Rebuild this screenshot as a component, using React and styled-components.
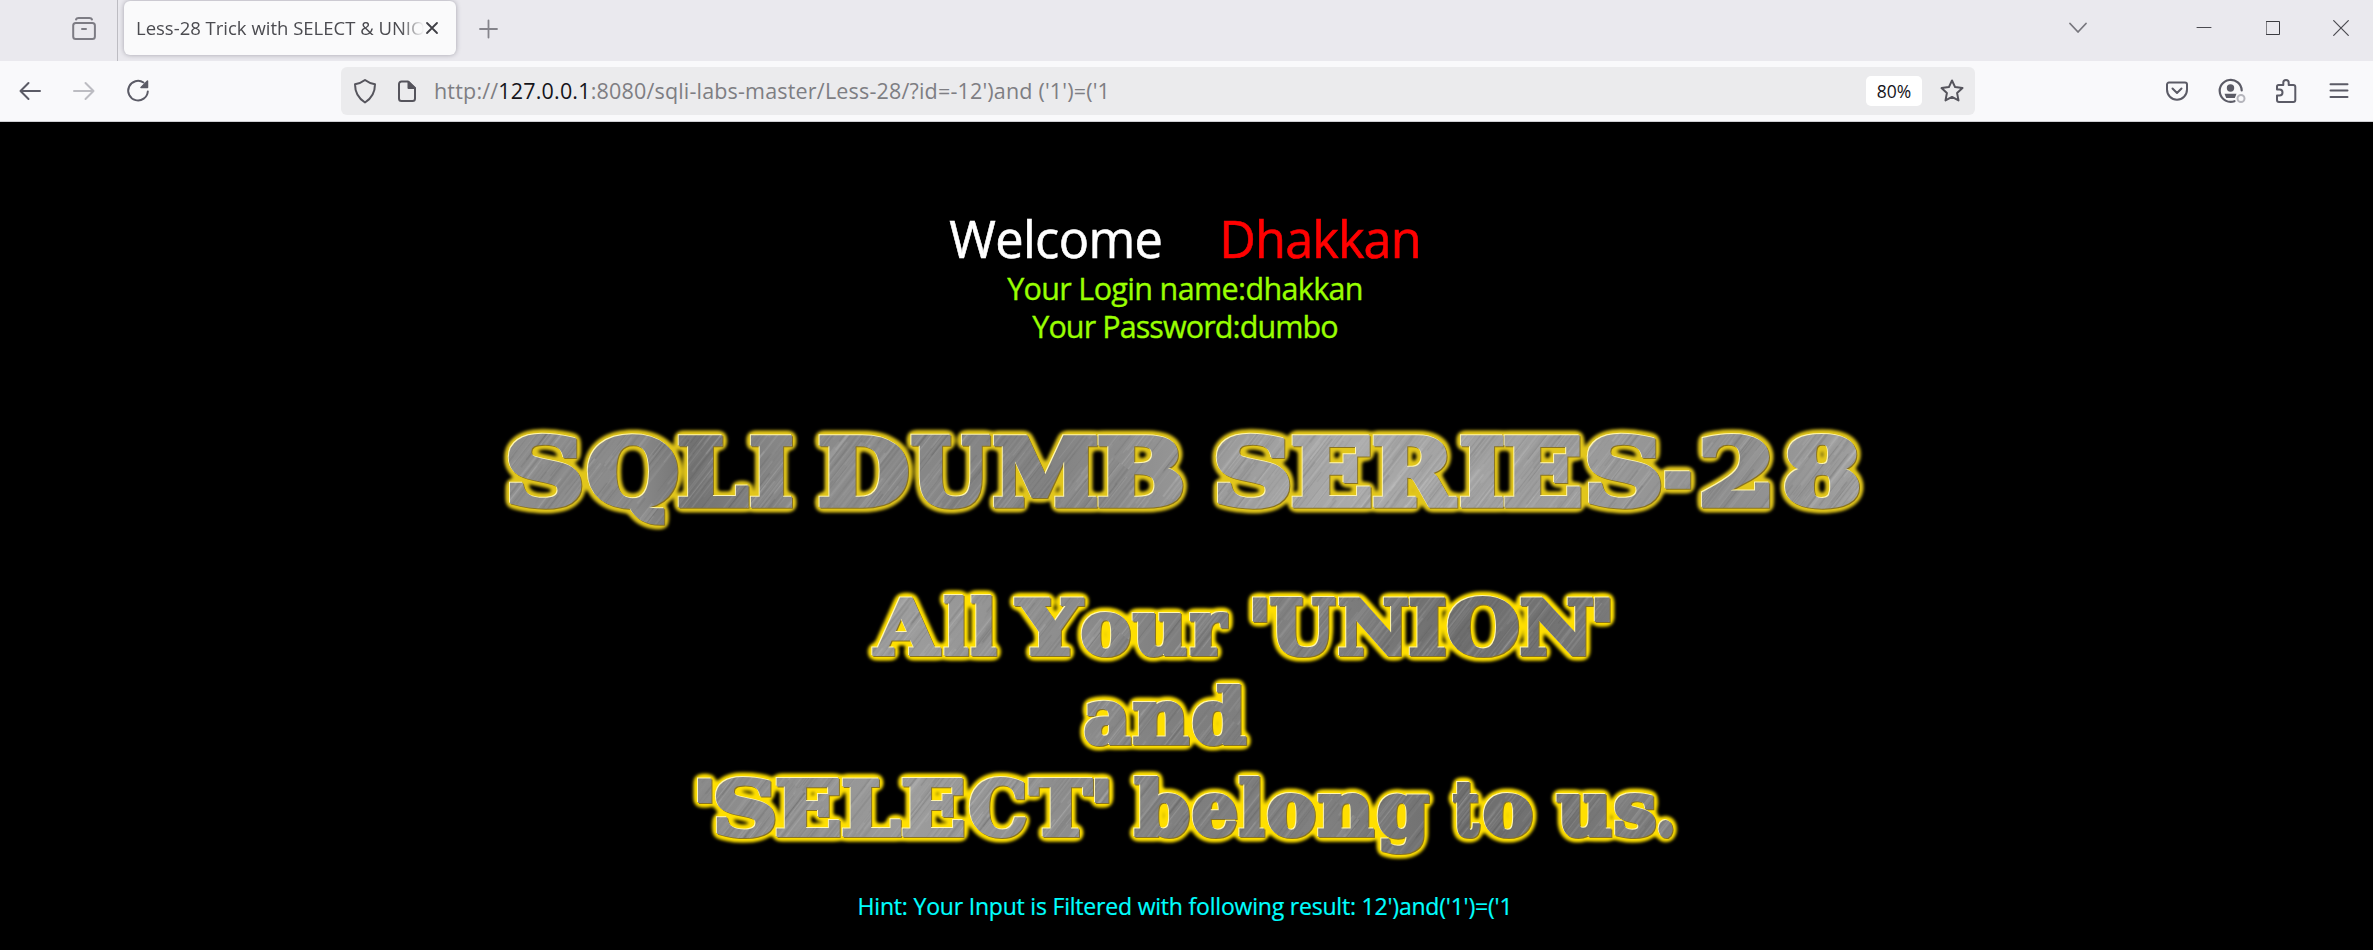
import React from 'react';
import styled, { createGlobalStyle } from 'styled-components';

const GlobalStyle = createGlobalStyle`
  html, body { margin: 0; padding: 0; background: #000; }
  * { box-sizing: border-box; }
`;

const Window = styled.div`
  width: 100%;
  height: 950px;
  display: flex;
  flex-direction: column;
  overflow: hidden;
  background: #000;
  font-family: 'Open Sans', 'Noto Sans', sans-serif;
`;

const TabStrip = styled.header`
  display: flex;
  align-items: flex-start;
  height: 61px;
  flex: none;
  background: #eae9ee;
`;

const ArchiveSlot = styled.div`
  width: 118px;
  height: 61px;
  padding: 15px 0 0 70px;
  border-right: 1px solid #bdbcc2;
`;

const Tab = styled.div`
  display: flex;
  align-items: center;
  width: 332px;
  height: 54px;
  margin: 1px 22px 0 6px;
  padding: 0 16px 0 12px;
  border-radius: 6px;
  background: #fafafb;
  box-shadow: 0 0 5px rgba(60, 58, 75, 0.4);
`;

const TabTitle = styled.div`
  flex: 1;
  overflow: hidden;
  white-space: nowrap;
  font-size: 18.5px;
  line-height: 28px;
  color: #4b4b50;
  mask-image: linear-gradient(to right, #000 265px, transparent 288px);
`;

const NewTab = styled.div`
  padding-top: 18px;
  flex: 1;
`;

const WindowControls = styled.div`
  display: flex;
  align-items: center;
  height: 56px;
`;

const ControlSlot = styled.div`
  display: flex;
  justify-content: center;
  width: ${(p) => p.$width}px;
`;

const Toolbar = styled.nav`
  display: flex;
  align-items: center;
  height: 61px;
  flex: none;
  background: #f9f9fb;
  border-bottom: 1px solid #cfcfd3;
`;

const NavButtons = styled.div`
  display: flex;
  gap: 26px;
  width: 341px;
  padding-left: 16px;
`;

const AddressBar = styled.div`
  display: flex;
  align-items: center;
  width: 1634px;
  height: 48px;
  padding: 0 9px 0 10px;
  border-radius: 6px;
  background: #ebebed;
`;

const Url = styled.div`
  flex: 1;
  margin: 0 0 0 9px;
  white-space: pre;
  font-size: 21.5px;
  line-height: 30px;
  letter-spacing: 0.18px;
  color: #7e7e83;
`;

const Host = styled.span`
  color: #15141a;
`;

const ZoomBadge = styled.div`
  width: 56px;
  height: 30px;
  margin-right: 16px;
  border-radius: 5px;
  background: #fff;
  color: #15141a;
  text-align: center;
  font-size: 17.5px;
  line-height: 31px;
`;

const ToolbarActions = styled.div`
  display: flex;
  flex: 1;
  justify-content: flex-end;
  gap: 25px;
  padding-right: 20px;
`;

const Page = styled.main`
  display: flex;
  flex-direction: column;
  align-items: center;
  flex: 1;
  padding: 83px 3px 0 0;
`;

const Greeting = styled.div`
  display: flex;
  gap: 57px;
  height: 64px;
  font-size: 50.5px;
  line-height: 67px;
`;

const Name = styled.span`
  color: ${(p) => p.$color};
  letter-spacing: ${(p) => p.$spacing}px;
  -webkit-text-stroke: 0.6px currentColor;
`;

const Credential = styled.div`
  height: 38px;
  font-size: 30.5px;
  line-height: 38px;
  letter-spacing: ${(p) => p.$spacing}px;
  white-space: nowrap;
  color: #99ff00;
  -webkit-text-stroke: 0.35px currentColor;
`;

const Banner = styled.svg`
  display: block;
  flex: none;
  align-self: flex-start;
  width: 2373px;
  height: ${(p) => p.$height}px;
  margin-top: ${(p) => p.$top}px;
  margin-right: -3px;
`;

const Hint = styled.div`
  margin-top: 10px;
  font-size: 23px;
  line-height: 32px;
  letter-spacing: -0.2px;
  white-space: nowrap;
  color: #00ffff;
  -webkit-text-stroke: 0.2px currentColor;
`;

const IconSvg = styled.svg`
  flex: none;
  fill: none;
  stroke: ${(p) => p.$color};
  stroke-width: ${(p) => p.$stroke};
  stroke-linecap: round;
  stroke-linejoin: round;
`;

const Icon = ({ w = 28, h = w, color = '#5b5b66', stroke = 2, children }) => (
  <IconSvg width={w} height={h} viewBox={`0 0 ${w} ${h}`} $color={color} $stroke={stroke}>
    {children}
  </IconSvg>
);

// Deterministic scratches for the brushed metal fill.
const scratches = (() => {
  let seed = 7;
  const next = () => {
    seed = (seed * 16807) % 2147483647;
    return seed / 2147483647;
  };
  return Array.from({ length: 700 }, () => ({
    x: next() * 320,
    y: next() * 320 - 60,
    len: 30 + next() * 120,
    light: next() > 0.5,
    o: 0.03 + next() * 0.09,
    w: 0.6 + next() * 1.2,
  }));
})();

const MetalDefs = ({ id, stops, height, glow }) => (
  <defs>
    <linearGradient id={`${id}-tone`} gradientUnits="userSpaceOnUse" x1="500" y1="0" x2="1870" y2="0">
      {stops.map(([o, c]) => (
        <stop key={o} offset={o} stopColor={c} />
      ))}
    </linearGradient>
    <pattern id={`${id}-brush`} patternUnits="userSpaceOnUse" width="320" height="320" patternTransform="rotate(38)">
      {scratches.map((s, i) => (
        <rect key={i} x={s.x} y={s.y} width={s.w} height={s.len} fill={s.light ? '#fff' : '#222'} opacity={s.o} />
      ))}
    </pattern>
    <pattern id={`${id}-metal`} patternUnits="userSpaceOnUse" width="2373" height={height}>
      <rect width="2373" height={height} fill={`url(#${id}-tone)`} />
      <rect width="2373" height={height} fill={`url(#${id}-brush)`} />
    </pattern>
    <filter
      id={`${id}-glow`}
      filterUnits="userSpaceOnUse"
      x="450"
      y="0"
      width="1480"
      height={height}
      colorInterpolationFilters="sRGB"
    >
      <feGaussianBlur in="SourceAlpha" stdDeviation="3" result="soft" />
      <feComponentTransfer in="soft" result="fat">
        <feFuncA type="linear" slope="14" intercept="-0.5" />
      </feComponentTransfer>
      <feGaussianBlur in="fat" stdDeviation="1.5" result="halo" />
      <feFlood floodColor={glow} />
      <feComposite in2="halo" operator="in" result="yellow" />
      <feOffset in="SourceAlpha" dx="-1" dy="-1.2" result="up" />
      <feFlood floodColor="#fff6b0" />
      <feComposite in2="up" operator="in" result="light" />
      <feOffset in="SourceAlpha" dx="0.9" dy="0.9" result="down" />
      <feFlood floodColor="#8a7420" />
      <feComposite in2="down" operator="in" result="dark" />
      <feMerge>
        <feMergeNode in="yellow" />
        <feMergeNode in="dark" />
        <feMergeNode in="light" />
        <feMergeNode in="SourceGraphic" />
      </feMerge>
    </filter>
  </defs>
);

const BANNER_FONT = "'DejaVu Serif', serif";
const measure = document.createElement('canvas').getContext('2d');

// Advance and ink box of a banner glyph, in em.
const glyphMetrics = (char) => {
  measure.font = `700 1000px ${BANNER_FONT}`;
  const m = measure.measureText(char);
  return {
    advance: m.width / 1000,
    left: -m.actualBoundingBoxLeft / 1000,
    ink: (m.actualBoundingBoxLeft + m.actualBoundingBoxRight) / 1000,
  };
};

// Each glyph is stretched so that its ink, outline included, spans its [left, right] pair.
const fitGlyph = (char, [left, right], size, outline) => {
  const g = glyphMetrics(char);
  const scale = (right - left - outline) / (g.ink * size);
  return {
    x: left + outline / 2 - g.left * size * scale,
    length: g.advance * size * scale,
  };
};

const MetalText = ({ id, size, outline, words }) => (
  <g
    filter={`url(#${id}-glow)`}
    fill={`url(#${id}-metal)`}
    stroke={`url(#${id}-metal)`}
    strokeWidth={outline}
    strokeLinejoin="miter"
    fontFamily={BANNER_FONT}
    fontWeight="700"
    fontSize={size}
  >
    {words.map(([text, y, spans]) => (
      <text key={text} y={y - outline / 2}>
        {[...text].map((char, i) => {
          const fit = fitGlyph(char, spans[i], size, outline);
          return (
            <tspan key={i} x={fit.x} textLength={fit.length} lengthAdjust="spacingAndGlyphs">
              {char}
            </tspan>
          );
        })}
      </text>
    ))}
  </g>
);

const TITLE = [
  ['SQLI', 107.5, [[509, 582], [587, 677], [679, 749], [751, 792]]],
  ['DUMB', 107.5, [[820, 908], [911, 991], [993, 1097], [1099, 1183]]],
  ['SERIES-28', 107.5, [[1217, 1290], [1293, 1371], [1374, 1458], [1461, 1503], [1505, 1581], [1588, 1661], [1664, 1692], [1702, 1769], [1785, 1860]]],
];

const SLOGAN = [
  ['All', 86, [[872, 942], [944, 969], [971, 997]]],
  ['Your', 86, [[1014, 1085], [1081, 1131], [1132, 1187], [1189, 1229]]],
  ["'UNION'", 86, [[1253, 1267], [1270, 1336], [1338, 1408], [1410, 1445], [1447, 1518], [1520, 1593], [1595, 1610]]],
  ['and', 175.5, [[1084, 1131], [1133, 1190], [1192, 1247]]],
  ["'SELECT'", 267, [[698, 712], [716, 775], [777, 840], [843, 901], [903, 964], [969, 1026], [1028, 1093], [1095, 1109]]],
  ['belong', 267, [[1134, 1190], [1192, 1237], [1239, 1265], [1267, 1316], [1318, 1375], [1377, 1430]]],
  ['to', 267, [[1452, 1481], [1483, 1533]]],
  ['us.', 267, [[1556, 1612], [1614, 1656], [1658, 1674]]],
];

const TITLE_TONES = [
  [0, '#8e8e8e'], [0.1, '#8a8a8a'], [0.14, '#727272'], [0.22, '#8c8c8c'], [0.4, '#828282'],
  [0.5, '#969696'], [0.62, '#aaaaaa'], [0.8, '#9a9a9a'], [0.9, '#8e8e8e'], [1, '#a0a0a0'],
];

const SLOGAN_TONES = [
  [0, '#9a9a9a'], [0.15, '#8a8a8a'], [0.3, '#9c9c9c'], [0.42, '#8c8c8c'], [0.5, '#7e7e7e'],
  [0.6, '#808080'], [0.7, '#6e6e6e'], [0.78, '#747474'], [1, '#999999'],
];

export default function App() {
  return (
    <Window>
      <GlobalStyle />
      <TabStrip>
        <ArchiveSlot>
          <Icon color="#7d7c84" stroke={2}>
            <path d="M6 4.500C6.500 3.300 7.500 3 8.500 3h11c1 0 2 .3 2.500 1.500" />
            <rect x="3.200" y="8" width="21.700" height="16" rx="2.500" />
            <path d="M12 14h4" />
          </Icon>
        </ArchiveSlot>
        <Tab>
          <TabTitle>Less-28 Trick with SELECT &amp; UNION</TabTitle>
          <Icon w={16} color="#3f3f45" stroke={1.8}>
            <path d="M3 3l10 10M13 3l-10 10" />
          </Icon>
        </Tab>
        <NewTab>
          <Icon w={22} color="#85848b" stroke={1.8}>
            <path d="M10.500 2.500v17M2 11h17" />
          </Icon>
        </NewTab>
        <WindowControls>
          <ControlSlot $width={186}>
            <Icon w={22} h={14} color="#77767d" stroke={1.8}>
              <path d="M3 2.500l8 8.500 8-8.500" />
            </Icon>
          </ControlSlot>
          <ControlSlot $width={65}>
            <Icon w={16} color="#4b4a50" stroke={1}>
              <path d="M1 7.500h14" />
            </Icon>
          </ControlSlot>
          <ControlSlot $width={73}>
            <Icon w={14} color="#3b3b40" stroke={1}>
              <rect x=".5" y=".5" width="13" height="13" />
            </Icon>
          </ControlSlot>
          <ControlSlot $width={64}>
            <Icon w={16} color="#4b4a50" stroke={1.2}>
              <path d="M.7.700l14.600 14.600M15.300.7L.7 15.300" />
            </Icon>
          </ControlSlot>
        </WindowControls>
      </TabStrip>

      <Toolbar>
        <NavButtons>
          <Icon>
            <path d="M24 14H4.500M12.500 6l-8 8 8 8" />
          </Icon>
          <Icon color="#bcbcc2">
            <path d="M4 14h19.500M15.500 6l8 8-8 8" />
          </Icon>
          <Icon>
            <path d="M23.800 14.500A9.800 9.800 0 1 1 19.500 5.500" />
            <path d="M23.500 4v6.500H17z" fill="#5b5b66" strokeWidth="1.500" />
          </Icon>
        </NavButtons>
        <AddressBar>
          <Icon color="#55545c">
            <path d="M14 3c3 2.300 6.500 3.700 10 4.300 0 8-3.200 14-10 18.200C7.200 21.300 4 15.300 4 7.300 7.500 6.700 11 5.300 14 3z" />
          </Icon>
          <Icon w={46} h={28} color="#55545c">
            <path d="M29 4.500h-6.500A2.500 2.500 0 0 0 20 7v14.500a2.500 2.500 0 0 0 2.500 2.500H33.500a2.500 2.500 0 0 0 2.500-2.500V11z" />
            <path d="M29.500 5v6h6z" fill="#55545c" />
          </Icon>
          <Url>
            http://<Host>127.0.0.1</Host>:8080/sqli-labs-master/Less-28/?id=-12')and ('1')=('1
          </Url>
          <ZoomBadge>80%</ZoomBadge>
          <Icon color="#55545c">
            <path d="M14 3.500l3.100 6.600 7.400 1-5.400 5 1.400 7.300L14 19.900l-6.500 3.500 1.400-7.300-5.400-5 7.400-1z" />
          </Icon>
        </AddressBar>
        <ToolbarActions>
          <Icon>
            <path d="M5 5.500h16a2 2 0 0 1 2 2v5a10 10.200 0 0 1-20 0v-5a2 2 0 0 1 2-2z" />
            <path d="M8.500 11.500l4.500 4.500 4.500-4.500" />
          </Icon>
          <Icon w={30} h={28}>
            <path d="M24.700 13.500A11 11 0 1 0 17.500 24.200" strokeWidth="2.200" />
            <circle cx="13.500" cy="11" r="3.700" fill="#5b5b66" stroke="none" />
            <path d="M7.500 16.800h12l-1.700 4.200h-8.600z" fill="#5b5b66" stroke="none" />
            <circle cx="24" cy="21.500" r="3.500" stroke="#b5b5bc" />
          </Icon>
          <Icon>
            <path d="M6.500 8h4.800V5.600a2.700 2.700 0 0 1 5.400 0V8h4.600a2 2 0 0 1 2 2v13a2 2 0 0 1-2 2H7a2 2 0 0 1-2-2v-4.500h2.500a3 3 0 0 0 0-6H5V9.500A1.500 1.500 0 0 1 6.500 8z" />
          </Icon>
          <Icon>
            <path d="M5.500 7.300h17M5.500 13.600h17M5.500 20h17" />
          </Icon>
        </ToolbarActions>
      </Toolbar>

      <Page>
        <Greeting>
          <Name $color="#ffffff" $spacing={-0.6}>Welcome</Name>
          <Name $color="#ff0000" $spacing={-0.9}>Dhakkan</Name>
        </Greeting>
        <Credential $spacing={-0.65}>Your Login name:dhakkan</Credential>
        <Credential $spacing={-0.9}>Your Password:dumbo</Credential>
        <Banner $height={140} $top={55}>
          <MetalDefs id="title" height={140} glow="#e2c61a" stops={TITLE_TONES} />
          <MetalText id="title" size={92.5} outline={5.5} words={TITLE} />
        </Banner>
        <Banner $height={310} $top={30}>
          <MetalDefs id="slogan" height={310} glow="#ffdf00" stops={SLOGAN_TONES} />
          <MetalText id="slogan" size={75} outline={4.2} words={SLOGAN} />
        </Banner>
        <Hint>Hint: Your Input is Filtered with following result: 12')and('1')=('1</Hint>
      </Page>
    </Window>
  );
}
